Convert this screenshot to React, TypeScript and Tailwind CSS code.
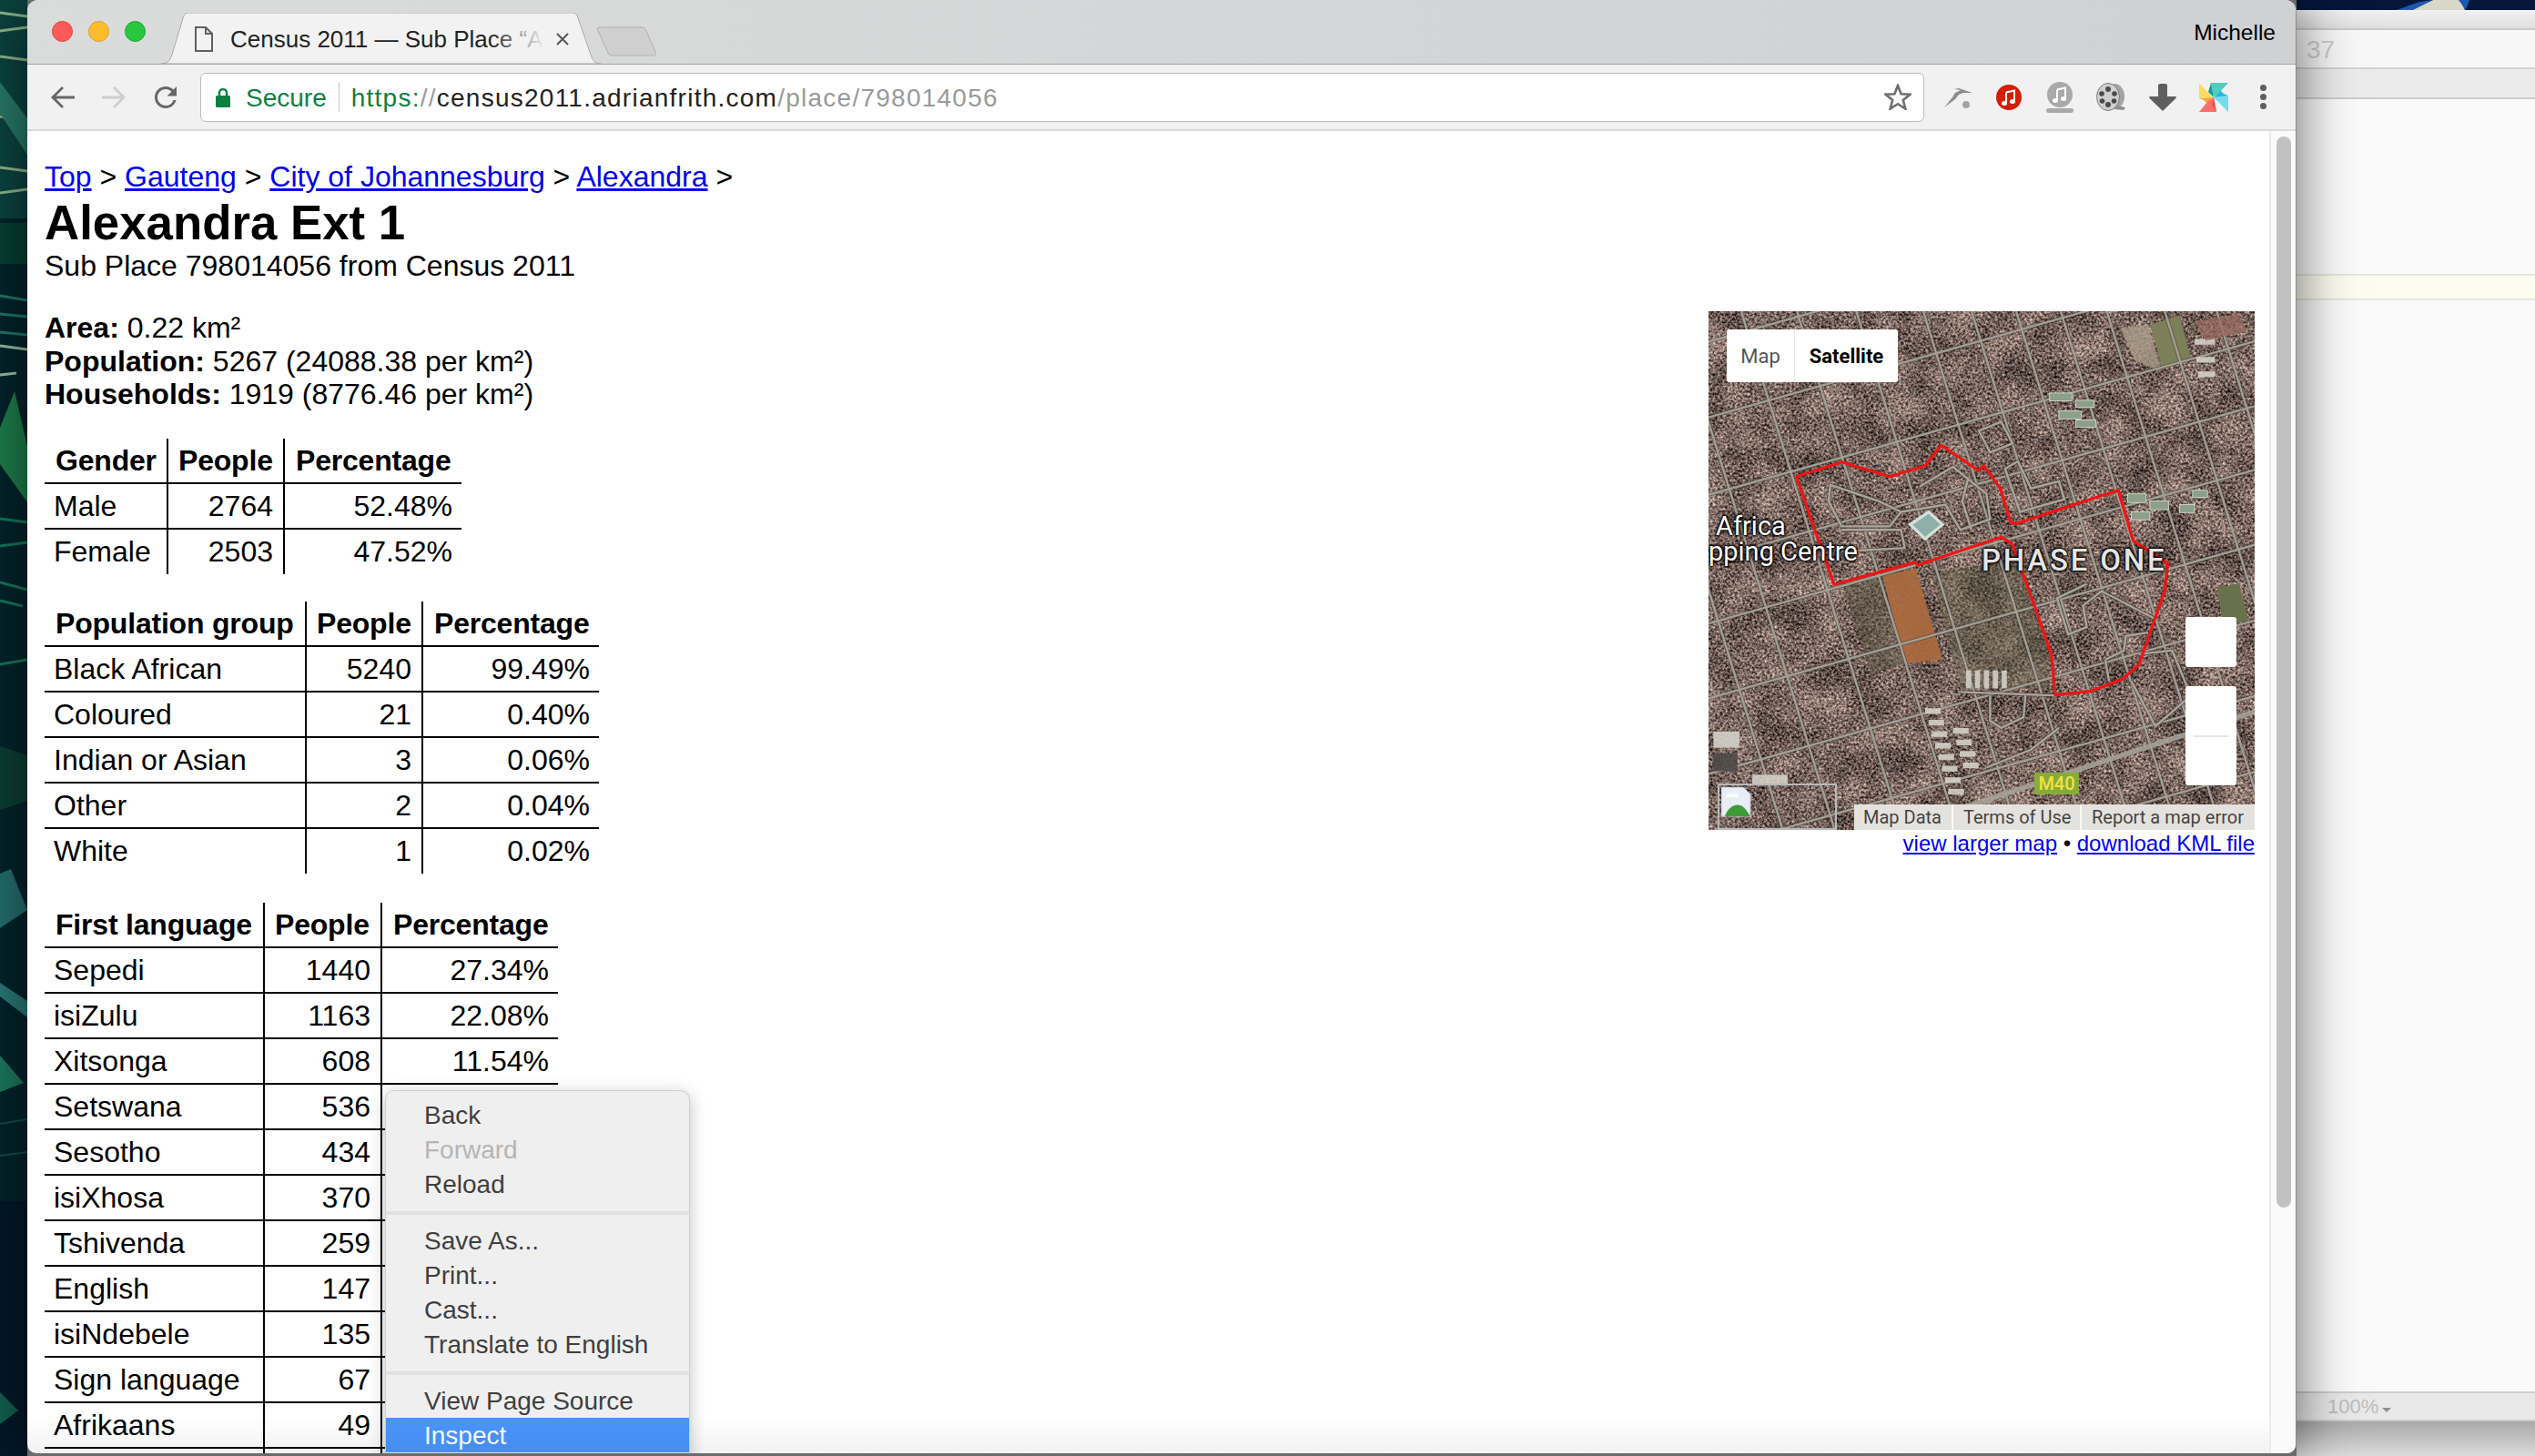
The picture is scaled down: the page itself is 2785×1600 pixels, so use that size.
import React from "react"

/* ---------- data ---------- */

const gender = [
  ["Male", "2764", "52.48%"],
  ["Female", "2503", "47.52%"],
]

const groups = [
  ["Black African", "5240", "99.49%"],
  ["Coloured", "21", "0.40%"],
  ["Indian or Asian", "3", "0.06%"],
  ["Other", "2", "0.04%"],
  ["White", "1", "0.02%"],
]

const languages = [
  ["Sepedi", "1440", "27.34%"],
  ["isiZulu", "1163", "22.08%"],
  ["Xitsonga", "608", "11.54%"],
  ["Setswana", "536", "10.18%"],
  ["Sesotho", "434", "8.24%"],
  ["isiXhosa", "370", "7.02%"],
  ["Tshivenda", "259", "4.92%"],
  ["English", "147", "2.79%"],
  ["isiNdebele", "135", "2.56%"],
  ["Sign language", "67", "1.27%"],
  ["Afrikaans", "49", "0.93%"],
  ["Other", "59", "1.12%"],
]

const shallowRoads = [130, 340, 555, 735, 912, 1120, 1330, 1540, 1750]
const steepRoads = [-200, -60, 120, 270, 430, 610, 740, 860, 980, 1104, 1260, 1400]

const boundary =
  "278,492 402,452 530,492 625,462 668,405 768,475 783,462 828,525 855,620 872,622 1145,530 1185,670 1278,733 1270,810 1200,1015 1155,1055 1070,1088 975,1098 965,985 860,680 830,660 605,738 598,730 380,792"

const innerRoads = [
  "M370 515 L500 560 L560 590 L530 630 L400 630 L365 560 Z",
  "M400 640 L560 640 L570 690 L400 700",
  "M610 520 L700 465 L790 540 L800 610 L720 640 L680 570 L560 590",
  "M740 500 L725 560 L750 640",
  "M840 470 L880 590 L1000 555 L985 505 L910 525 L875 450 Z",
  "M770 365 L830 340 L860 400 L800 425 Z",
  "M1060 790 L980 830 L1010 930 L1060 910 L1050 850 L1100 810 L1240 885",
  "M1110 1000 L1160 975 L1165 935 L1225 925 M1110 1000 L1120 1060",
  "M1200 985 L1290 975 L1340 1100 L1245 1185 L1180 1060",
  "M800 1100 L800 1170 L830 1190 L890 1160 L895 1100",
  "M720 1090 L980 1100 M985 1190 L910 1250 L790 1300",
]

/* ---------- small pieces ---------- */

function DataTable({ title, rows, cols }: { title: string; rows: string[][]; cols: number[] }) {
  const width = cols[0] + cols[1] + cols[2]
  return (
    <table className="table-fixed border-collapse text-[32px] leading-[37px] text-black" style={{ width }}>
      <colgroup>
        {cols.map((c, i) => <col key={i} style={{ width: c }} />)}
      </colgroup>
      <thead>
        <tr className="h-[49px]">
          <th className="border-r-2 border-b-2 border-black pl-[12px] text-left font-bold tracking-[-0.2px] whitespace-nowrap">{title}</th>
          <th className="border-r-2 border-b-2 border-black pl-[11px] text-left font-bold tracking-[-0.2px]">People</th>
          <th className="border-b-2 border-black pl-[12px] text-left font-bold tracking-[-0.2px]">Percentage</th>
        </tr>
      </thead>
      <tbody>
        {rows.map((row, i) => {
          const line = i < rows.length - 1 ? "border-b-2 border-black" : ""
          return (
            <tr key={row[0]} className="h-[50px]">
              <td className={`border-r-2 border-black pl-[10px] text-left whitespace-nowrap ${line}`}>{row[0]}</td>
              <td className={`border-r-2 border-black pr-[11px] text-right ${line}`}>{row[1]}</td>
              <td className={`pr-[10px] text-right ${line}`}>{row[2]}</td>
            </tr>
          )
        })}
      </tbody>
    </table>
  )
}

function Wallpaper() {
  return (
    <svg width="30" height="1600" viewBox="0 0 30 1600" className="block">
      <rect width="30" height="1600" fill="#03242c" />
      <rect y="0" width="30" height="240" fill="#0b4440" />
      <path d="M0 14 30 18M0 34 30 30M0 62 30 66M0 128 30 134M0 184 30 188M0 212 30 208" stroke="#8fb98b" strokeWidth="3" />
      <path d="M0 90 30 130 30 170 0 125Z" fill="#2a7a6a" />
      <rect y="245" width="30" height="45" fill="#064033" />
      <path d="M0 325 30 330M0 345 30 348M0 365 30 368" stroke="#1e7a68" strokeWidth="3" />
      <path d="M0 412 18 410M0 380 30 384" stroke="#9cc0a6" strokeWidth="3" />
      <path d="M0 470 16 430 30 490 30 552 0 510Z" fill="#1e7f4c" />
      <path d="M0 570 30 574M0 600 30 596M0 640 30 648M0 660 25 666M0 730 30 725" stroke="#137a5c" strokeWidth="3" />
      <path d="M0 820 30 830 30 880 0 890Z" fill="#0a3f35" />
      <path d="M0 960 12 955 30 1000 0 1020Z" fill="#256f70" />
      <path d="M0 1080 30 1100 30 1118 0 1095Z" fill="#2b7a78" />
      <path d="M0 1160 26 1190 0 1200Z" fill="#1c7a5c" />
      <path d="M0 1235 30 1230M0 1270 30 1266" stroke="#114f4a" strokeWidth="2" />
      <rect y="1320" width="30" height="280" fill="#03182a" />
      <path d="M0 1530 20 1550 0 1565Z" fill="#13604f" />
    </svg>
  )
}

function SatelliteMap() {
  return (
    <svg viewBox="42 33 1470 1440" preserveAspectRatio="none" className="block h-[570px] w-[600px]">
      <defs>
        <filter id="sat" x="0" y="0" width="100%" height="100%" colorInterpolationFilters="sRGB">
          <feTurbulence type="fractalNoise" baseFrequency="0.15" numOctaves="4" seed="7" />
          <feColorMatrix values="1.6 0.25 0 0 -0.46  1.4 0.25 0 0 -0.43  1.3 0.25 0 0 -0.4  0 0 0 0 1" />
        </filter>
        <filter id="patches" x="0" y="0" width="100%" height="100%" colorInterpolationFilters="sRGB">
          <feTurbulence type="fractalNoise" baseFrequency="0.012" numOctaves="2" seed="3" />
          <feColorMatrix values="1.8 0 0 0 -0.42  1.6 0 0 0 -0.4  1.5 0 0 0 -0.4  0 0 0 0 1" />
        </filter>
      </defs>
      <rect x="42" y="33" width="1470" height="1440" fill="#7a6e66" filter="url(#sat)" />
      <rect x="42" y="33" width="1470" height="1440" fill="#7a6e66" filter="url(#patches)" opacity="0.25" />
      <polygon points="510,765 600,748 672,1000 570,1012" fill="#a9693f" opacity="0.95" />
      <polygon points="400,790 510,765 570,1012 480,1040" fill="#55523f" opacity="0.45" />
      <polygon points="640,760 880,720 965,985 960,1080 720,1080" fill="#55583f" opacity="0.4" />
      <polygon points="1230,70 1310,45 1340,165 1265,195" fill="#7d7f58" />
      <polygon points="1150,80 1225,70 1260,200 1190,170" fill="#a89a88" opacity="0.8" />
      <polygon points="1410,800 1470,790 1495,890 1430,910" fill="#69704c" />
      <g stroke="#3f3a35" strokeWidth="11" opacity="0.45" fill="none">
        {shallowRoads.map((c) => (
          <line key={c} x1="42" y1={c - 0.29 * 42} x2="1512" y2={c - 0.29 * 1512} />
        ))}
        {steepRoads.map((d) => (
          <line key={d} x1={d + 0.3 * 33} y1="33" x2={d + 0.3 * 1473} y2="1473" />
        ))}
      </g>
      <g stroke="#a39f95" strokeWidth="6" fill="none">
        {shallowRoads.map((c) => (
          <line key={c} x1="42" y1={c - 0.29 * 42} x2="1512" y2={c - 0.29 * 1512} />
        ))}
        {steepRoads.map((d) => (
          <line key={d} x1={d + 0.3 * 33} y1="33" x2={d + 0.3 * 1473} y2="1473" />
        ))}
      </g>
      <line x1="700" y1="1420" x2="1512" y2="1145" stroke="#a5a197" strokeWidth="14" opacity="0.9" />
      <g fill="none" stroke="#3f3a35" strokeWidth="11" opacity="0.55">
        {innerRoads.map((d) => <path key={d} d={d} />)}
      </g>
      <g fill="none" stroke="#aaa69c" strokeWidth="6">
        {innerRoads.map((d) => <path key={d} d={d} />)}
      </g>
      <polygon points="585,625 635,590 672,625 625,665" fill="#8fb0a8" stroke="#d4e2dc" strokeWidth="8" />
      <g fill="#8c9f88" stroke="#dfe3d8" strokeWidth="2">
        <rect x="960" y="260" width="60" height="22" />
        <rect x="985" y="310" width="60" height="22" />
        <rect x="1030" y="280" width="50" height="20" />
        <rect x="1030" y="335" width="55" height="20" />
        <rect x="1170" y="540" width="50" height="24" />
        <rect x="1230" y="560" width="50" height="24" />
        <rect x="1180" y="590" width="50" height="22" />
        <rect x="1310" y="570" width="40" height="22" />
        <rect x="1345" y="530" width="40" height="20" />
      </g>
      <g fill="#d3d0c8" opacity="0.9">
        {[0, 1, 2, 3, 4, 5, 6, 7].map((i) => <rect key={i} x={625 + i * 9} y={1135 + i * 32} width="42" height="16" />)}
        {[0, 1, 2, 3].map((i) => <rect key={i} x={700 + i * 9} y={1190 + i * 32} width="42" height="16" />)}
        {[0, 1, 2, 3, 4].map((i) => <rect key={i} x={735 + i * 24} y="1030" width="14" height="50" />)}
        <rect x="55" y="1200" width="70" height="45" />
        <rect x="55" y="1260" width="65" height="50" fill="#4e4a48" />
        <rect x="160" y="1320" width="95" height="30" />
        <rect x="1350" y="110" width="55" height="16" />
        <rect x="1355" y="160" width="50" height="16" />
        <rect x="1360" y="200" width="45" height="16" />
      </g>
      <polygon points="1350,60 1470,40 1490,90 1380,115" fill="#9a6a5c" opacity="0.7" />
      <polygon points={boundary} fill="none" stroke="#f01414" strokeWidth="8" strokeLinejoin="round" />
    </svg>
  )
}

function Gazelle() {
  return (
    <svg width="34" height="26" viewBox="0 0 34 26" className="block">
      <path d="M1 24 10 13 13 8 19 5 12 4 17 3 23 5 32 8 22 8 17 10 13 15Z" fill="#8c8c8c" />
      <circle cx="25" cy="21" r="4" fill="#a3a3a3" />
    </svg>
  )
}

function NoteCircle({ bg }: { bg: string }) {
  return (
    <svg width="28" height="28" viewBox="0 0 28 28" className="block">
      <circle cx="14" cy="14" r="14" fill={bg} />
      <path d="M11 8.500 20 6.500V18" fill="none" stroke="#fff" strokeWidth="2" />
      <path d="M11 8.500V20.500" fill="none" stroke="#fff" strokeWidth="2" />
      <ellipse cx="9" cy="20.500" rx="3" ry="2.500" fill="#fff" />
      <ellipse cx="18" cy="18.500" rx="3" ry="2.500" fill="#fff" />
    </svg>
  )
}

function FilmReel() {
  return (
    <svg width="33" height="31" viewBox="0 0 33 31" className="block">
      <ellipse cx="20" cy="15" rx="11" ry="14" fill="#a3a3a3" />
      <path d="M22 25 32 27 30 30 20 29Z" fill="#8f8f8f" />
      <ellipse cx="13" cy="15.500" rx="12.500" ry="15" fill="#cfcfcf" stroke="#7c7c7c" />
      <circle cx="13" cy="7" r="3" fill="#4a4a4a" />
      <circle cx="13" cy="24" r="3" fill="#4a4a4a" />
      <circle cx="6" cy="12" r="2.800" fill="#4a4a4a" />
      <circle cx="20" cy="12" r="2.800" fill="#4a4a4a" />
      <circle cx="6.500" cy="20" r="2.800" fill="#4a4a4a" />
      <circle cx="19.500" cy="20" r="2.800" fill="#4a4a4a" />
    </svg>
  )
}

function Pinwheel() {
  return (
    <svg width="32" height="32" viewBox="0 0 32 32" className="block">
      <polygon points="0,0 15,16 0,17" fill="#fbdc62" />
      <polygon points="0,17 15,16 9,23 5,19" fill="#f9a73e" />
      <polygon points="0,32 9,21 16,16 19,32" fill="#fa6e6a" />
      <polygon points="16,16 19,32 14,24" fill="#e2504a" />
      <polygon points="32,32 16,16 32,14" fill="#74dcef" />
      <polygon points="32,14 17,16 23,8 27,12" fill="#20b9de" />
      <polygon points="32,0 22,11 16,16 13,0" fill="#4fcdbd" />
      <polygon points="16,16 13,0 10,10" fill="#0f9f8f" />
    </svg>
  )
}

/* ---------- browser chrome ---------- */

function TabStrip() {
  return (
    <div className="relative flex h-[71px] shrink-0 items-start border-b border-[#a3a3a3] bg-gradient-to-r from-[#dadbdb] to-[#d0d1d3]">
      <div className="mt-[23px] ml-[27px] flex gap-[17px]">
        <div className="h-[23px] w-[23px] rounded-full border border-[#e0443e] bg-[#fc5b57]" />
        <div className="h-[23px] w-[23px] rounded-full border border-[#dea123] bg-[#fdbc2e]" />
        <div className="h-[23px] w-[23px] rounded-full border border-[#1aab29] bg-[#27c83f]" />
      </div>

      <div className="relative mt-[14px] ml-[17px] flex h-[57px] w-[483px] items-start">
        <svg width="483" height="57" viewBox="0 0 483 57" className="absolute inset-0">
          <path d="M0 56 C8 56 10 52 12 46 L24 6 C25 2 27 0 31 0 L451 0 C455 0 457 2 458 6 L472 46 C474 52 476 56 483 56 Z" fill="#f2f2f2" stroke="#a9a9a9" />
        </svg>
        <svg width="20" height="28" viewBox="0 0 20 28" className="relative mt-[15px] ml-[37px] shrink-0">
          <path d="M1 1H12L19 8V27H1Z M12 1V8H19" fill="none" stroke="#5f5f5f" strokeWidth="2" />
        </svg>
        <div className="relative mt-[14px] ml-[19px] w-[345px] overflow-hidden text-[26px] leading-[30px] whitespace-nowrap text-[#222]">
          Census 2011 — Sub Place “Alexandra Ext 1
          <div className="absolute inset-y-0 right-0 w-[60px] bg-gradient-to-r from-[#f2f2f2]/0 to-[#f2f2f2]" />
        </div>
        <svg width="14" height="14" viewBox="0 0 14 14" className="relative mt-[22px] ml-[13px]">
          <path d="M1 1 13 13M13 1 1 13" stroke="#555" strokeWidth="2" />
        </svg>
      </div>

      <svg width="68" height="34" viewBox="0 0 68 34" className="mt-[29px] -ml-[5px]">
        <path d="M3 1H50C53 1 54 3 55 5L65 28C66 31 65 32 62 32H18C15 32 14 31 13 29L2 5C1 2 1 1 3 1Z" fill="#cfcfcf" stroke="#b0b0b0" />
      </svg>

      <div className="mt-[22px] mr-[22px] ml-auto text-[24.500px] leading-[28px] text-black">Michelle</div>
    </div>
  )
}

function Toolbar() {
  return (
    <div className="flex h-[73px] shrink-0 items-center border-b-2 border-[#dadada] bg-[#f1f1f1]">
      <svg width="28" height="28" viewBox="0 0 28 28" className="ml-[25px] shrink-0">
        <path d="M27 14H4M14 3 3 14l11 11" fill="none" stroke="#666" strokeWidth="2.800" />
      </svg>
      <svg width="28" height="28" viewBox="0 0 28 28" className="ml-[28px] shrink-0">
        <path d="M1 14H24M14 3l11 11-11 11" fill="none" stroke="#cdcdcd" strokeWidth="2.800" />
      </svg>
      <svg width="36" height="36" viewBox="0 0 24 24" className="ml-[25px] shrink-0">
        <path fill="#666" d="M17.65 6.35A7.958 7.958 0 0 0 12 4c-4.42 0-7.99 3.58-7.99 8s3.57 8 7.99 8c3.73 0 6.84-2.55 7.73-6h-2.08A5.99 5.99 0 0 1 12 18c-3.31 0-6-2.69-6-6s2.69-6 6-6c1.66 0 3.14.69 4.22 1.78L13 11h7V4l-2.35 2.35z" />
      </svg>

      <div className="ml-[20px] flex h-[54px] w-[1894px] shrink-0 items-center rounded-[6px] border border-[#bcbcbc] bg-white pr-[13px] text-[28px] leading-[32px] whitespace-nowrap">
        <svg width="16" height="22" viewBox="0 0 16 22" className="ml-[16px] shrink-0">
          <path d="M4 10V6a4 4 0 0 1 8 0v4" fill="none" stroke="#0b8043" strokeWidth="2.400" />
          <rect x="0" y="9" width="16" height="13" rx="1.500" fill="#0b8043" />
        </svg>
        <span className="ml-[17px] pt-[2px] text-[#0b8043]">Secure</span>
        <div className="mx-[13px] h-[32px] w-px bg-[#c4c4c4]" />
        <span className="pt-[2px] tracking-[1.250px]">
          <span className="text-[#0b8043]">https:</span>
          <span className="text-[#9a9a9a]">//</span>
          <span className="text-[#222]">census2011.adrianfrith.com</span>
          <span className="text-[#9a9a9a]">/place/798014056</span>
        </span>
        <svg width="30" height="29" viewBox="0 0 30 29" className="ml-auto shrink-0">
          <polygon points="15,2 18.6,11.2 28.4,11.8 20.8,18 23.3,27.5 15,22.2 6.7,27.5 9.2,18 1.6,11.8 11.4,11.2" fill="none" stroke="#6e6e6e" strokeWidth="2.600" />
        </svg>
      </div>

      <div className="ml-[21px] shrink-0"><Gazelle /></div>
      <div className="ml-[24px] shrink-0"><NoteCircle bg="#d21f05" /></div>
      <div className="ml-[27px] flex w-[30px] shrink-0 flex-col items-center gap-[1px]">
        <NoteCircle bg="#a9a9a9" />
        <div className="h-[5px] w-[30px] rounded-full bg-[#a9a9a9]" />
      </div>
      <div className="ml-[25px] shrink-0"><FilmReel /></div>
      <svg width="30" height="30" viewBox="0 0 30 30" className="ml-[25px] shrink-0">
        <path d="M10 2C10 1 11 0 12 0H18C19 0 20 1 20 2V14H29C30 14 30 15 29.500 16L16 29C15.500 30 14.500 30 14 29L.5 16C0 15 0 14 1 14H10Z" fill="#5f5f5f" />
      </svg>
      <div className="ml-[25px] shrink-0"><Pinwheel /></div>
      <div className="ml-[35px] flex shrink-0 flex-col gap-[3.500px]">
        <div className="h-[6.500px] w-[6.500px] rounded-full bg-[#5f5f5f]" />
        <div className="h-[6.500px] w-[6.500px] rounded-full bg-[#5f5f5f]" />
        <div className="h-[6.500px] w-[6.500px] rounded-full bg-[#5f5f5f]" />
      </div>
    </div>
  )
}

/* ---------- map block ---------- */

function MapBlock() {
  const halo = "[text-shadow:0_0_2px_#000,0_0_2px_#000,0_0_3px_#000,0_0_3px_#000,0_0_4px_#000]"
  return (
    <div className="mt-[198px] mr-[16px] w-[600px] shrink-0">
      <div className="relative h-[570px] w-[600px] overflow-hidden">
        <SatelliteMap />

        <div className="absolute top-[20px] left-[20px] flex h-[58px] w-[188px] rounded-[3px] bg-white font-['Roboto',sans-serif] text-[22px]">
          <div className="flex w-[75px] items-center justify-center border-r border-[#e6e6e6] text-[#565656]">Map</div>
          <div className="flex flex-1 items-center justify-center font-bold text-black">Satellite</div>
        </div>

        <div className={`absolute top-[222px] left-[8px] font-['Roboto',sans-serif] text-[29px] leading-[29px] text-white ${halo}`}>Africa</div>
        <div className={`absolute top-[250px] left-0 font-['Roboto',sans-serif] text-[29px] leading-[29px] text-white ${halo}`}>pping Centre</div>
        <div className={`absolute top-[256px] left-[300px] font-['Roboto',sans-serif] text-[33px] leading-[36px] font-medium tracking-[2.800px] text-[#e4e4e4] ${halo}`}>PHASE ONE</div>

        <div className="absolute top-[336px] left-[524px] h-[55px] w-[56px] rounded-[3px] bg-white" />
        <div className="absolute top-[412px] left-[524px] flex h-[109px] w-[56px] items-center justify-center rounded-[3px] bg-white">
          <div className="h-[2px] w-[38px] bg-[#e6e6e6]" />
        </div>

        <div className="absolute top-[507px] left-[358px] flex h-[24px] w-[49px] items-center justify-center bg-[#86ab3c] font-['Roboto',sans-serif] text-[20px] font-medium text-[#f4e23e]">M40</div>

        <div className="absolute top-[519px] left-[10px] h-[51px] w-[131px] border-2 border-[#b9b9b9]">
          <svg width="33" height="33" viewBox="0 0 33 33" className="mt-[2px] ml-[2px]">
            <path d="M0 0H24L32 8V32H0Z" fill="#e8eef6" stroke="#b5c4d6" />
            <path d="M4 32C8 20 20 14 28 26L32 32Z" fill="#3f9a3a" />
            <path d="M5 11a4 4 0 0 1 7-3 4 4 0 0 1 7 3Z" fill="#fff" />
          </svg>
        </div>

        <div className="absolute right-0 bottom-0 flex h-[28px] w-[440px] items-center bg-[#e4e2de] font-['Roboto',sans-serif] text-[20px] text-[#444]">
          <span className="w-[109px] border-r-2 border-white/80 pl-[10px] leading-[28px]">Map Data</span>
          <span className="w-[141px] border-r-2 border-white/80 pl-[11px] leading-[28px]">Terms of Use</span>
          <span className="pl-[11px] leading-[28px]">Report a map error</span>
        </div>
      </div>

      <div className="text-right text-[24px] leading-[29px] text-black">
        <a href="#larger" className="text-[#0000ee] underline">view larger map</a>
        {" • "}
        <a href="#kml" className="text-[#0000ee] underline">download KML file</a>
      </div>
    </div>
  )
}

/* ---------- context menu ---------- */

function ContextMenu() {
  const item = "flex h-[38px] items-center pl-[42px]"
  return (
    <div className="absolute top-[1054px] left-[393px] h-[420px] w-[335px] rounded-t-[10px] border border-[#cfcfcf] bg-[#efefef] pt-[7px] text-[28px] text-[#3f3f3f] shadow-[0_4px_18px_rgba(0,0,0,0.25)]">
      <div className={item}>Back</div>
      <div className={`${item} text-[#b5b5b5]`}>Forward</div>
      <div className={item}>Reload</div>
      <div className="mt-[11px] mb-[9px] h-[4px] bg-[#e2e2e2]" />
      <div className={item}>Save As...</div>
      <div className={item}>Print...</div>
      <div className={item}>Cast...</div>
      <div className={item}>Translate to English</div>
      <div className="mt-[11px] mb-[9px] h-[4px] bg-[#e2e2e2]" />
      <div className={item}>View Page Source</div>
      <div className={`${item} bg-[#4a94fb] text-white`}>Inspect</div>
    </div>
  )
}

/* ---------- neighbouring window ---------- */

function BackWindow() {
  return (
    <div className="flex min-w-0 flex-1 flex-col">
      <div className="relative h-[11px] shrink-0 overflow-hidden bg-[#04163a]">
        <svg width="262" height="11" viewBox="0 0 262 11" className="block">
          <path d="M120 11 140 4 150 0 170 0 180 0 185 11Z" fill="#d8d8c8" />
          <path d="M110 11 135 2 150 0 128 11Z" fill="#1e57b0" />
          <path d="M178 0 190 0 186 11Z" fill="#1e57b0" />
        </svg>
      </div>
      <div className="h-[22px] shrink-0 border-b-2 border-[#c9c9c9] bg-gradient-to-b from-[#f1f1f1] to-[#dfdfdf]" />
      <div className="flex h-[43px] shrink-0 items-center border-b-2 border-[#d2d2d2] bg-[#f7f7f7] pt-[2px] pl-[11px] text-[28px] text-[#cccccc]">37</div>
      <div className="h-[33px] shrink-0 border-b-2 border-[#cdcdcd] bg-[#ebebeb]" />
      <div className="h-[192px] shrink-0 bg-[#fafafa]" />
      <div className="h-[29px] shrink-0 border-y-2 border-[#e6e6da] bg-[#fcfcf1]" />
      <div className="flex-1 bg-[#fafafa]" />
      <div className="flex h-[33px] shrink-0 items-center gap-[4px] border-y-2 border-[#cdcdcd] bg-[#e9e9e9] pl-[34px] text-[22px] text-[#bdbdbd]">
        100%
        <div className="mt-[8px] h-0 w-0 border-x-[5px] border-t-[5px] border-x-transparent border-t-[#909090]" />
      </div>
      <div className="h-[38px] shrink-0 bg-gradient-to-b from-[#a9a9a9] to-[#dcdcdc]" />
    </div>
  )
}

/* ---------- page ---------- */

export default function App() {
  return (
    <div className="flex h-[1600px] w-[2785px] overflow-hidden bg-[#03242c] [font-family:'Liberation_Sans',Arial,sans-serif]">
      <div className="w-[30px] shrink-0">
        <Wallpaper />
      </div>

      <div className="relative z-10 flex w-[2493px] shrink-0 flex-col bg-[#6b6b6b] shadow-[0_0_60px_rgba(0,0,0,0.6)]">
        <div className="flex h-[1597px] shrink-0 flex-col overflow-hidden rounded-t-[12px] rounded-b-[10px] border-r border-[#8a8a8a] bg-white">
          <TabStrip />
          <Toolbar />

          <div className="flex min-h-0 flex-1">
            <div className="relative flex min-w-0 flex-1 justify-between overflow-hidden pl-[19px] text-[32px] leading-[37px] text-black">
              <div className="pt-[32px]">
                <div className="whitespace-nowrap">
                  <a href="#top" className="text-[#0000ee] underline">Top</a>{" > "}
                  <a href="#gauteng" className="text-[#0000ee] underline">Gauteng</a>{" > "}
                  <a href="#joburg" className="text-[#0000ee] underline">City of Johannesburg</a>{" > "}
                  <a href="#alexandra" className="text-[#0000ee] underline">Alexandra</a>{" > "}
                </div>
                <h1 className="mt-[2px] text-[52.800px] leading-[60px] font-bold">Alexandra Ext 1</h1>
                <div className="-mt-[1px]">Sub Place 798014056 from Census 2011</div>

                <div className="mt-[31px] leading-[36.500px]">
                  <div><b>Area:</b> 0.22 km²</div>
                  <div><b>Population:</b> 5267 (24088.38 per km²)</div>
                  <div><b>Households:</b> 1919 (8776.46 per km²)</div>
                </div>

                <div className="mt-[30.500px]"><DataTable title="Gender" rows={gender} cols={[135, 128, 195]} /></div>
                <div className="mt-[30px]"><DataTable title="Population group" rows={groups} cols={[287, 128, 194]} /></div>
                <div className="mt-[32px]"><DataTable title="First language" rows={languages} cols={[241, 129, 194]} /></div>
              </div>

              <MapBlock />
              <ContextMenu />
              <div className="absolute inset-x-0 bottom-0 h-[40px] bg-gradient-to-b from-black/0 to-black/5" />
            </div>

            <div className="relative w-[29px] shrink-0 border-l-2 border-[#ececec] bg-[#fafafa] pt-[6px] pl-[6px]">
              <div className="h-[1177px] w-[16px] rounded-full bg-[#c1c1c1]" />
            </div>
          </div>
        </div>

        <div className="h-[3px] overflow-hidden pl-[1124px] [font-family:'Liberation_Serif',serif] text-[36px] leading-[44px] whitespace-nowrap text-black">
          Statistics South Africa Census 2011 Sub Place Population
        </div>
      </div>

      <BackWindow />
    </div>
  )
}
